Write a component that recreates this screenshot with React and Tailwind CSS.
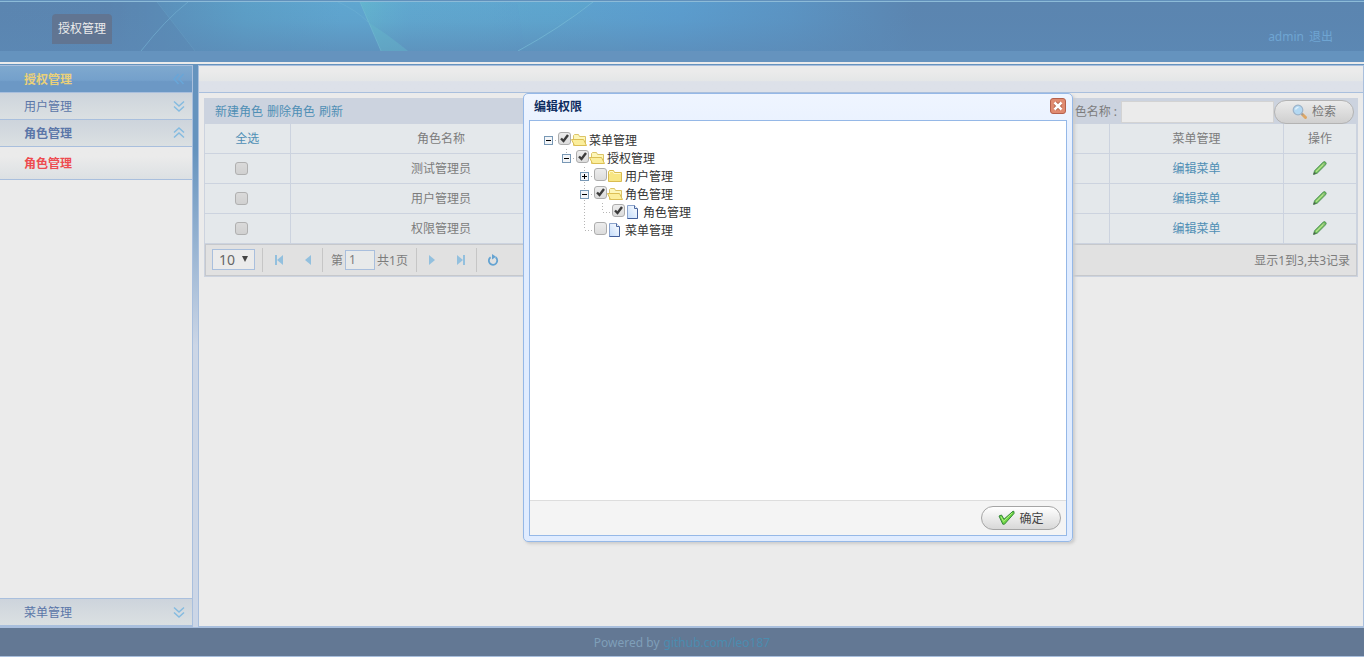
const roles = [
  { id: 1, name: "测试管理员" },
  { id: 2, name: "用户管理员" },
  { id: 3, name: "权限管理员" },
];

const treeNodes = [
  { id: "root", label: "菜单管理", level: 0, icon: "open", checked: true, toggle: "minus" },
  { id: "auth", label: "授权管理", level: 1, icon: "open", checked: true, toggle: "minus" },
  { id: "user", label: "用户管理", level: 2, icon: "closed", checked: false, toggle: "plus" },
  { id: "role", label: "角色管理", level: 2, icon: "open", checked: true, toggle: "minus" },
  { id: "role-leaf", label: "角色管理", level: 3, icon: "file", checked: true },
  { id: "menu", label: "菜单管理", level: 2, icon: "file", checked: false },
];

const BannerArt = () => (
  <svg
    className="absolute inset-0 h-full w-full"
    viewBox="0 0 1364 49"
    preserveAspectRatio="none"
    aria-hidden="true"
  >
    <defs>
      <linearGradient id="sky" x1="0" x2="1" y1="0" y2="0">
        <stop offset="0" stopColor="#5b85b0" />
        <stop offset="0.08" stopColor="#5b86b1" />
        <stop offset="0.13" stopColor="#5b93bd" />
        <stop offset="0.18" stopColor="#5c9fc7" />
        <stop offset="0.25" stopColor="#5fa6d0" />
        <stop offset="0.36" stopColor="#5fa6cf" />
        <stop offset="0.5" stopColor="#5b9dce" />
        <stop offset="0.58" stopColor="#5b94c3" />
        <stop offset="0.67" stopColor="#5b85b0" />
        <stop offset="1" stopColor="#5b85b0" />
      </linearGradient>
      <linearGradient id="dusk" x1="0" x2="0" y1="0" y2="1">
        <stop offset="0" stopColor="#5c89b5" stopOpacity="0" />
        <stop offset="0.4" stopColor="#5c89b5" stopOpacity="0.12" />
        <stop offset="1" stopColor="#5c89b5" stopOpacity="0.65" />
      </linearGradient>
      <linearGradient id="teal" x1="0" x2="1" y1="0" y2="0">
        <stop offset="0" stopColor="#63b6ce" stopOpacity="0.9" />
        <stop offset="0.3" stopColor="#61abd0" stopOpacity="0.4" />
        <stop offset="1" stopColor="#61abd0" stopOpacity="0" />
      </linearGradient>
    </defs>
    <rect width="1364" height="49" fill="url(#sky)" />
    <path d="M100 0H157L195 49H100Z" fill="#5a80ac" opacity="0.35" />
    <path d="M360 0L381 49H525L517 0Z" fill="url(#teal)" />
    <path d="M517 0L525 49L593 0Z" fill="#60abd0" opacity="0.4" />
    <path d="M575 0L628 49H518L593 0Z" fill="#60a5cf" opacity="0.2" />
    <rect width="1364" height="49" fill="url(#dusk)" />
    <path d="M360 0L368 20Q390 34 408 49H381Z" fill="#67b8cb" opacity="0.4" />
    <path d="M338 0Q356 8 368 20" fill="none" stroke="#78bad6" strokeOpacity="0.3" />
    <path d="M360 0L381 49" fill="none" stroke="#7cc4d6" strokeOpacity="0.4" />
    <path d="M188 0Q165 18 141 49" fill="none" stroke="#72aed0" strokeOpacity="0.7" />
    <path d="M157 0L195 49" fill="none" stroke="#72aed0" strokeOpacity="0.25" />
    <path d="M593 0Q560 26 518 49" fill="none" stroke="#78bad6" strokeOpacity="0.7" />
  </svg>
);

const Chevrons = ({ direction }) => {
  const rotation = { down: "", up: "rotate-180", left: "rotate-90" }[direction];
  return (
    <svg width="16" height="16" viewBox="0 0 16 16" className={rotation}>
      <path
        d="M3 3.5L8 8L13 3.5M3 8.5L8 13L13 8.5"
        fill="none"
        stroke="currentColor"
        strokeWidth="1.5"
      />
    </svg>
  );
};

const Toggle = ({ kind }) => (
  <svg width="9" height="9" viewBox="0 0 9 9" shapeRendering="crispEdges">
    <rect x="0.5" y="0.5" width="8" height="8" fill="#f3f5f8" stroke="#7898b5" />
    <path d="M2 4.5H7" stroke="#000" />
    {kind === "plus" && <path d="M4.5 2V7" stroke="#000" />}
  </svg>
);

const NodeIcon = ({ icon }) => {
  switch (icon) {
    case "open":
      return (
        <svg width="16" height="14" viewBox="0 0 16 14">
          <path d="M2.5 12.5V2.5L3.5 1.5H7.5L8.5 3.5H14.5V12.5Z" fill="#fdf6b8" stroke="#dcc468" />
          <path d="M0.5 6.5H12.5L15.5 12.5H3.5Z" fill="#fbee9c" stroke="#dcbf55" />
        </svg>
      );
    case "closed":
      return (
        <svg width="16" height="14" viewBox="0 0 16 14">
          <path d="M1.5 12.5V2.5L2.5 1.5H6.5L7.5 3.5H14.5V12.5Z" fill="#f8e684" stroke="#d9bb50" />
          <path d="M2.5 5V3L3 2.5H6L7 4.5H13.5" fill="none" stroke="#fff8c8" />
        </svg>
      );
    default:
      return (
        <svg width="16" height="14" viewBox="0 0 16 14">
          <defs>
            <linearGradient id="paper" x1="1" y1="0" x2="0" y2="1">
              <stop offset="0" stopColor="#ffffff" />
              <stop offset="1" stopColor="#c4dcfa" />
            </linearGradient>
          </defs>
          <path d="M2.5 0.5H9.5L12.5 3.5V13.5H2.5Z" fill="url(#paper)" stroke="#8ba3cc" />
          <path d="M9.5 0.5V3.5H12.5" fill="#e8f0fc" stroke="#4d699f" />
          <path d="M2.5 13.5H12.5V4" fill="none" stroke="#44609c" />
        </svg>
      );
  }
};

const CheckBox = ({ id, label, checked = false, muted = false }) => (
  <span className="relative inline-flex h-[13px] w-[13px] shrink-0">
    <input
      id={id}
      type="checkbox"
      aria-label={label}
      defaultChecked={checked}
      className={
        muted
          ? "peer h-[13px] w-[13px] appearance-none rounded-[3px] border border-[#b0b0b0] bg-linear-to-b from-[#dadada] to-[#d0d0d0]"
          : "peer h-[13px] w-[13px] appearance-none rounded-[3px] border border-[#adadad] bg-linear-to-b from-[#ededed] to-[#dcdcdc]"
      }
    />
    <svg
      className="pointer-events-none absolute inset-0 hidden peer-checked:block"
      width="13"
      height="13"
      viewBox="0 0 13 13"
    >
      <path d="M3 6.5L5.5 9L10 3" fill="none" stroke="#3c3c3c" strokeWidth="2.4" />
    </svg>
  </span>
);

const TreeLines = ({ node }) => {
  const dots = { stroke: "#b5b5b5", strokeDasharray: "1 2", fill: "none" };
  return (
    <>
      {Array.from({ length: node.level }).map((_, i) => (
        <svg key={i} width="18" height="18" className="shrink-0">
          {i === 2 && <path d="M8.5 0V18" {...dots} />}
        </svg>
      ))}
      <span className="relative flex h-[18px] w-[18px] shrink-0 items-center pl-1">
        <svg width="18" height="18" className="absolute inset-0">
          {node.level > 0 && <path d="M8.5 0V9" {...dots} />}
          {node.toggle && node.level === 2 && <path d="M8.5 9V18" {...dots} />}
          <path d="M9 9.5H18" {...dots} />
        </svg>
        {node.toggle && (
          <span className="relative">
            <Toggle kind={node.toggle} />
          </span>
        )}
      </span>
    </>
  );
};

const SideItem = ({ label, bold, direction }) => (
  <button
    type="button"
    className="flex h-[27px] w-full shrink-0 items-center justify-between border-b border-[#a9bfdd] bg-linear-to-b from-[#cdd4dc] to-[#dbe0e2] pr-[5px] pl-6 text-[#5b76a8]"
  >
    <span className={bold ? "pt-0.5 font-bold" : "pt-0.5"}>{label}</span>
    <span className="text-[#85bbe0]">
      <Chevrons direction={direction} />
    </span>
  </button>
);

const Sidebar = () => (
  <nav className="flex w-[193px] shrink-0 flex-col border-t border-r border-[#a9bfdd] bg-[#ebebeb]">
    <div className="flex h-[27px] shrink-0 items-center justify-between border-b border-[#a9bfdd] bg-linear-to-b from-[#7fa9cf] via-[#74a0cb] via-55% to-[#6c98c5] to-60% pr-[5px] pl-6 text-[#ead079]">
      <span className="pt-0.5 font-bold">授权管理</span>
      <span className="text-[#68a6d8]">
        <Chevrons direction="left" />
      </span>
    </div>
    <SideItem label="用户管理" direction="down" />
    <SideItem label="角色管理" bold direction="up" />
    <a
      href="#role"
      className="flex h-[33px] shrink-0 items-center border-b border-[#a9bfdd] bg-linear-to-b from-[#ebebeb] from-30% to-[#dce0e3] pt-0.5 pl-6 font-bold text-[#ee4b50]"
    >
      角色管理
    </a>
    <div className="grow" />
    <div className="border-t border-b border-[#a9bfdd]">
      <SideItem label="菜单管理" direction="down" />
    </div>
  </nav>
);

const SearchIcon = () => (
  <svg width="16" height="16" viewBox="0 0 16 16">
    <path d="M10.5 10.5L13.5 13.5" stroke="#dea765" strokeWidth="3" strokeLinecap="round" />
    <path d="M9 9L11 11" stroke="#9a9a9a" strokeWidth="1.6" />
    <circle cx="6" cy="6" r="4.8" fill="#b3d8f2" stroke="#9db3c9" strokeWidth="1.2" />
    <path d="M3.5 5.5Q4 3.5 6.5 3.2" fill="none" stroke="#e3f2fc" strokeWidth="1.4" />
  </svg>
);

const PencilIcon = () => (
  <svg width="16" height="16" viewBox="0 0 16 16">
    <path d="M1.5 14.5L2.5 10.8L11.2 2.1Q12.3 1.1 13.5 2.1Q14.7 3.2 13.8 4.6L5.2 13.2Z" fill="#66bb55" stroke="#5a9560" />
    <path d="M4 11.8L12.3 3.5" stroke="#b5e08a" strokeWidth="1.5" />
    <path d="M11 3.5L12.8 5.3" stroke="#8b9a8b" />
    <path d="M1.5 14.5L2.2 12L4 13.8Z" fill="#4f5a4f" />
  </svg>
);

const OkIcon = () => (
  <svg width="17" height="16" viewBox="0 0 17 16">
    <path d="M1 6L3.5 5L6 9.2L15 1.2L16 1.5V3.5L6.5 14.2H4.8Z" fill="#6fd544" stroke="#35883a" />
    <path d="M3 6.8L5.6 11.5L14 3" fill="none" stroke="#aef080" />
  </svg>
);

const ReloadIcon = () => (
  <svg width="12" height="12" viewBox="0 0 12 12">
    <path d="M3.6 3.2A4.2 4.2 0 1 0 8.6 3.3" fill="none" stroke="currentColor" strokeWidth="1.8" />
    <path d="M5 0L9 2.8L5 5.4Z" fill="currentColor" />
  </svg>
);

const PillButton = ({ children, muted }) => (
  <button
    type="button"
    className={
      muted
        ? "flex h-6 w-20 items-center justify-center gap-1 rounded-full border border-[#b3b3b3] bg-linear-to-b from-[#ebebeb] to-[#cfcfcf] text-[#777777]"
        : "flex h-6 w-20 items-center justify-center gap-1 rounded-full border border-[#a5a5a5] bg-linear-to-b from-white to-[#d8d8d8] text-[#444444]"
    }
  >
    {children}
  </button>
);

const Separator = () => <span className="h-6 w-px bg-[#c6c6c6]" />;

const PageButton = ({ label, bar, flip }) => (
  <button type="button" aria-label={label} className="flex h-6 w-[29px] items-center justify-center text-[#93c0de]">
    <svg width="10" height="12" viewBox="0 0 10 12" className={flip ? "rotate-180" : ""}>
      <path d={bar ? "M9 1V11L3 6Z" : "M8 1V11L2 6Z"} fill="currentColor" />
      {bar && <rect x="1" y="1" width="2" height="10" fill="currentColor" />}
    </svg>
  </button>
);

const Pager = () => (
  <div className="flex h-8 items-center border border-[#c6c8cc] bg-[#e1e1e1] pr-1.5 pl-1.5">
    <span className="relative flex">
      <select
        aria-label="每页条数"
        defaultValue="10"
        className="h-[21px] w-[43px] appearance-none border border-[#a9bfdd] bg-[#ebebeb] pl-1.5 text-sm leading-4 text-[#666666]"
      >
        <option>10</option>
        <option>20</option>
      </select>
      <svg
        width="6"
        height="6"
        viewBox="0 0 6 6"
        className="pointer-events-none absolute top-[7px] right-[7px]"
      >
        <path d="M0 0H6L3 6Z" fill="#444444" />
      </svg>
    </span>
    <span className="w-[7px]" />
    <Separator />
    <span className="w-px" />
    <PageButton label="首页" bar />
    <PageButton label="上一页" />
    <Separator />
    <label htmlFor="page" className="pt-0.5 pl-2">
      第
    </label>
    <input
      id="page"
      defaultValue="1"
      className="mx-0.5 h-5 w-[30px] border border-[#a9bfdd] bg-[#e8eaea] pl-[3px]"
    />
    <span className="pt-0.5 pr-2">共1页</span>
    <Separator />
    <span className="w-px" />
    <PageButton label="下一页" flip />
    <PageButton label="末页" bar flip />
    <Separator />
    <button type="button" aria-label="刷新" className="flex w-8 justify-center text-[#64a3d2]">
      <ReloadIcon />
    </button>
    <span className="ml-auto pt-0.5">显示1到3,共3记录</span>
  </div>
);

const RoleGrid = () => (
  <section className="border border-[#ccd3df] bg-[#ccd3df]">
    <div className="flex h-[25px] items-center justify-between pr-[3px] pl-2.5">
      <div className="flex gap-1 pt-px text-[#4f8fb5]">
        <a href="#new">新建角色</a>
        <a href="#delete">删除角色</a>
        <a href="#refresh">刷新</a>
      </div>
      <div className="flex items-center">
        <label htmlFor="role-name" className="pt-px pr-1">
          角色名称 :
        </label>
        <input id="role-name" className="h-[22px] w-[153px] border border-[#d3d3d3] bg-[#ebebeb]" />
        <PillButton muted>
          <SearchIcon />
          <span className="pt-px">检索</span>
        </PillButton>
      </div>
    </div>
    <table className="w-full table-fixed border-collapse bg-[#e4e8eb] text-center [&_td]:border-r [&_td]:border-b [&_td]:border-[#ccd3df] [&_th]:border-r [&_th]:border-b [&_th]:border-[#ccd3df]">
      <colgroup>
        <col className="w-[85px]" />
        <col className="w-[302px]" />
        <col />
        <col className="w-[174px]" />
        <col className="w-[73px]" />
      </colgroup>
      <thead>
        <tr className="h-[29px]">
          <th className="pt-px font-normal">
            <a href="#all" className="text-[#4f8fb5]">
              全选
            </a>
          </th>
          <th className="pt-px font-normal">角色名称</th>
          <th />
          <th className="pt-px font-normal">菜单管理</th>
          <th className="pt-px font-normal">操作</th>
        </tr>
      </thead>
      <tbody>
        {roles.map((role) => (
          <tr key={role.id} className="h-[30px]">
            <td className="pr-[11px]">
              <span className="flex justify-center">
                <CheckBox id={`role-${role.id}`} label={role.name} muted />
              </span>
            </td>
            <td className="pt-0.5">{role.name}</td>
            <td />
            <td className="pt-0.5">
              <a href="#menu" className="text-[#4f8fb5]">
                编辑菜单
              </a>
            </td>
            <td>
              <button type="button" aria-label="编辑" className="block w-full">
                <span className="flex justify-center">
                  <PencilIcon />
                </span>
              </button>
            </td>
          </tr>
        ))}
      </tbody>
    </table>
    <Pager />
  </section>
);

const PermissionDialog = () => (
  <div
    role="dialog"
    aria-labelledby="dialog-title"
    className="absolute top-[93px] left-[523px] flex h-[449px] w-[550px] flex-col rounded-[5px] border border-[#95b8e7] bg-linear-to-b from-[#eff5ff] to-[#e0ecff] to-20% px-[5px] pb-[5px] shadow-[2px_2px_3px_#cccccc]"
  >
    <div className="flex h-[26px] shrink-0 items-center justify-between pr-px pl-[5px]">
      <h2 id="dialog-title" className="font-bold text-[#0e2d5f]">
        编辑权限
      </h2>
      <button type="button" aria-label="关闭" className="pb-0.5">
        <svg width="16" height="16" viewBox="0 0 16 16">
          <rect x="0.5" y="0.5" width="15" height="15" rx="2.5" fill="#e08b70" stroke="#b5604c" />
          <path d="M5 5L11 11M11 5L5 11" stroke="#a9563f" strokeWidth="4" />
          <path d="M4.5 4.5L11.5 11.5M11.5 4.5L4.5 11.5" stroke="#fff" strokeWidth="2.5" />
        </svg>
      </button>
    </div>
    <div className="flex grow flex-col border border-[#95b8e7] bg-white">
      <ul className="grow p-2.5 text-[#333333]">
        {treeNodes.map((node) => (
          <li key={node.id} className="flex h-[18px] items-center">
            <TreeLines node={node} />
            <span className="flex h-full w-[13px] items-start pt-px">
              <CheckBox id={`node-${node.id}`} checked={node.checked} />
            </span>
            <NodeIcon icon={node.icon} />
            <label htmlFor={`node-${node.id}`} className="pt-0.5 pl-0.5">
              {node.label}
            </label>
          </li>
        ))}
      </ul>
      <div className="flex h-[35px] items-center justify-end border-t border-[#dddddd] bg-[#f4f4f4] pr-[5px]">
        <PillButton>
          <OkIcon />
          <span className="pt-0.5">确定</span>
        </PillButton>
      </div>
    </div>
  </div>
);

export default function App() {
  return (
    <div className="relative flex h-screen flex-col overflow-hidden bg-[#ebebeb] font-['Noto_Sans','Noto_Sans_CJK_SC',sans-serif] text-xs text-[#7c7c7c]">
      <header className="shrink-0 border-b-2 border-[#ebebeb]">
        <div className="h-px bg-[#6190bb]" />
        <div className="relative flex h-[50px] items-center justify-between border-t border-[#8cbbd8] pr-[31px] pl-[52px]">
          <BannerArt />
          <a
            href="#auth"
            className="relative mt-1 flex h-[30px] items-center rounded-t-sm bg-[#617592] px-1.5 text-[#ebebeb]"
          >
            授权管理
          </a>
          <div className="relative flex gap-[5px] pt-[21px] text-[#6fa5d2]">
            <span>admin</span>
            <a href="#logout">退出</a>
          </div>
        </div>
        <div className="h-[11px] bg-[#6593be]" />
      </header>

      <div className="flex grow border-t border-[#6593be]">
        <Sidebar />
        <div className="w-[5px] shrink-0 bg-linear-to-b from-[#6593be] from-15% to-[#ccd6e6] to-50%" />
        <main className="grow border border-[#a9bfdd]">
          <div className="h-[27px] border-b border-[#a9bfdd] bg-linear-to-b from-[#ebebeb] from-20% via-[#e4e6e7] via-58% to-[#dde1e9] to-60%" />
          <div className="p-[5px]">
            <RoleGrid />
          </div>
        </main>
      </div>

      <footer className="flex h-[30px] shrink-0 items-center justify-center gap-1 border-y border-[#a9bfdd] bg-[#637894] pt-0.5 text-[#7f9fb9]">
        <span>Powered by</span>
        <a href="#github" className="text-[#4b8caf]">
          github.com/leo187
        </a>
      </footer>

      <PermissionDialog />
    </div>
  );
}
